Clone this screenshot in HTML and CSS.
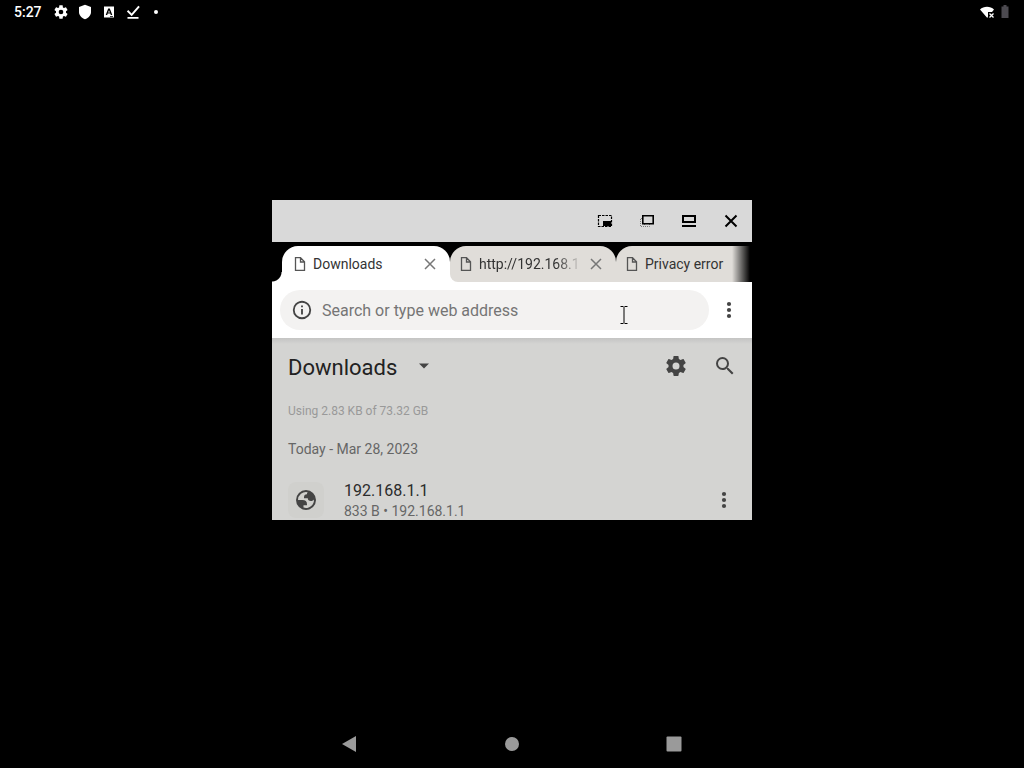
FILE: index.html
```html
<!DOCTYPE html>
<html lang="en">

<head>
    <meta charset="UTF-8">
    <meta name="viewport" content="width=device-width, initial-scale=1.0">
    <title>Downloads</title>
    <link rel="stylesheet" href="styles.css">
</head>

<body>

    <header class="status-bar">
        <span class="clock">5:27</span>
        <div class="notifications">
            <svg viewBox="0 0 24 24" width="16" height="16"><path d="M19.43 12.98c.04-.32.07-.64.07-.98s-.03-.66-.07-.98l2.11-1.65c.19-.15.24-.42.12-.64l-2-3.46c-.12-.22-.39-.3-.61-.22l-2.49 1c-.52-.4-1.08-.73-1.69-.98l-.38-2.65C14.46 2.18 14.25 2 14 2h-4c-.25 0-.46.18-.49.42l-.38 2.65c-.61.25-1.17.59-1.69.98l-2.49-1c-.23-.09-.49 0-.61.22l-2 3.46c-.13.22-.07.49.12.64l2.11 1.65c-.04.32-.07.65-.07.98s.03.66.07.98l-2.11 1.65c-.19.15-.24.42-.12.64l2 3.46c.12.22.39.3.61.22l2.49-1c.52.4 1.08.73 1.69.98l.38 2.65c.03.24.24.42.49.42h4c.25 0 .46-.18.49-.42l.38-2.65c.61-.25 1.17-.59 1.69-.98l2.49 1c.23.09.49 0 .61-.22l2-3.46c.12-.22.07-.49-.12-.64zM12 15.5A3.5 3.5 0 1 1 12 8.5a3.5 3.5 0 0 1 0 7z"/></svg>
            <svg viewBox="0 0 16 16" width="16" height="16"><path d="M8 .8l6 2.300V8c0 3.200-2.300 6-6 7.200C4.300 14 2 11.200 2 8V3.100z"/></svg>
            <svg viewBox="0 0 16 16" width="16" height="16"><path fill-rule="evenodd" d="M3 2.500h10v11H3zM7.200 4.500L4.700 11h1.500l.5-1.400h2.600L9.800 11h1.500L8.800 4.500zM8 6.200l.9 2.300H7.100zM9 12h3v.8H9z"/></svg>
            <svg viewBox="0 0 16 16" width="16" height="16"><path d="M2.500 13h11v1.800h-11zM3.200 6.100l3.400 3.400 6.700-7.700 1.500 1.300-8.100 9.100-4.800-4.800z"/></svg>
            <svg viewBox="0 0 16 16" width="16" height="16"><circle cx="7" cy="8" r="2"/></svg>
        </div>
        <div class="system-icons">
            <svg viewBox="0 0 16 16" width="16" height="16"><path d="M1 5.500C4.500 1.800 11.500 1.800 15 5.500L13 8H9v4.500L8.300 14z"/><path d="M10.500 9.500l4 4M14.500 9.500l-4 4" stroke="#fff" stroke-width="1.300"/></svg>
            <svg class="battery" viewBox="0 0 10 16" width="10" height="16"><path d="M3.500 1h3v1.500H8.500V14h-7V2.500h2z"/></svg>
        </div>
    </header>

    <main class="desktop">
        <section class="window">
            <div class="caption-bar">
                <button type="button" aria-label="Picture in picture">
                    <svg viewBox="0 0 16 16" width="16" height="16"><path d="M1.500 2.500h13v11h-13z" fill="none" stroke="#000" stroke-width="1.200" stroke-dasharray="2.500 1"/><path d="M6 8h8v5H6z"/></svg>
                </button>
                <button type="button" aria-label="Restore">
                    <svg viewBox="0 0 16 16" width="16" height="16"><path d="M3 5.500H1.500v8h9V11M5.500 11v2" fill="none" stroke="#777" stroke-dasharray="1 1"/><path d="M3.800 2.800h10.400v7.900H3.800z" fill="none" stroke="#000" stroke-width="1.600"/></svg>
                </button>
                <button type="button" aria-label="Maximize">
                    <svg viewBox="0 0 16 16" width="16" height="16"><path d="M2 3h12v6H2z" fill="none" stroke="#000" stroke-width="2"/><path d="M1 12h14v2H1z"/></svg>
                </button>
                <button type="button" aria-label="Close window">
                    <svg viewBox="0 0 16 16" width="16" height="16"><path d="M2.500 2.500l11 11M13.500 2.500l-11 11" stroke="#000" stroke-width="2"/></svg>
                </button>
            </div>

            <nav class="tab-strip">
                <div class="tab active">
                    <svg class="page-icon" viewBox="0 0 14 16" width="14" height="16"><path d="M2.500 1.700h5L11.500 5.700v8.600h-9zM7.500 2v4h4"/></svg>
                    <button type="button" class="tab-title">Downloads</button>
                    <button type="button" class="tab-close" aria-label="Close tab"><svg viewBox="0 0 12 12" width="12" height="12"><path d="M1 1l10 10M11 1L1 11"/></svg></button>
                </div>
                <div class="tab">
                    <svg class="page-icon" viewBox="0 0 14 16" width="14" height="16"><path d="M2.500 1.700h5L11.500 5.700v8.600h-9zM7.500 2v4h4"/></svg>
                    <button type="button" class="tab-title faded">http://192.168.1</button>
                    <button type="button" class="tab-close" aria-label="Close tab"><svg viewBox="0 0 12 12" width="12" height="12"><path d="M1 1l10 10M11 1L1 11"/></svg></button>
                </div>
                <div class="tab last">
                    <svg class="page-icon" viewBox="0 0 14 16" width="14" height="16"><path d="M2.500 1.700h5L11.500 5.700v8.600h-9zM7.500 2v4h4"/></svg>
                    <button type="button" class="tab-title">Privacy error</button>
                </div>
            </nav>

            <div class="toolbar">
                <label class="omnibox">
                    <svg viewBox="0 0 24 24" width="22" height="22"><path d="M11 17h2v-6h-2v6zm1-15a10 10 0 1 0 0 20 10 10 0 0 0 0-20zm0 18a8 8 0 1 1 0-16 8 8 0 0 1 0 16zM11 9h2V7h-2v2z"/></svg>
                    <input type="text" placeholder="Search or type web address" aria-label="Search or type web address">
                    <svg class="cursor" viewBox="0 0 8 20" width="8" height="20"><path d="M.5 1.500h3M4.500 1.500h3M4 2v16M.5 18.500h3M4.500 18.500h3"/></svg>
                </label>
                <button type="button" class="menu" aria-label="Menu">
                    <svg viewBox="0 0 24 24" width="24" height="24"><circle cx="12" cy="6" r="2.100"/><circle cx="12" cy="12" r="2.100"/><circle cx="12" cy="18" r="2.100"/></svg>
                </button>
            </div>

            <div class="downloads">
                <div class="downloads-header">
                    <h1>Downloads</h1>
                    <button type="button" class="filter" aria-label="Filter">
                        <svg viewBox="0 0 10 6" width="10" height="6"><path d="M0 .5h10L5 5.500z"/></svg>
                    </button>
                    <div class="actions">
                        <button type="button" aria-label="Settings">
                            <svg viewBox="0 0 24 24" width="24" height="24"><path d="M19.43 12.98c.04-.32.07-.64.07-.98s-.03-.66-.07-.98l2.11-1.65c.19-.15.24-.42.12-.64l-2-3.46c-.12-.22-.39-.3-.61-.22l-2.49 1c-.52-.4-1.08-.73-1.69-.98l-.38-2.65C14.46 2.18 14.25 2 14 2h-4c-.25 0-.46.18-.49.42l-.38 2.65c-.61.25-1.17.59-1.69.98l-2.49-1c-.23-.09-.49 0-.61.22l-2 3.46c-.13.22-.07.49.12.64l2.11 1.65c-.04.32-.07.65-.07.98s.03.66.07.98l-2.11 1.65c-.19.15-.24.42-.12.64l2 3.46c.12.22.39.3.61.22l2.49-1c.52.4 1.08.73 1.69.98l.38 2.65c.03.24.24.42.49.42h4c.25 0 .46-.18.49-.42l.38-2.65c.61-.25 1.17-.59 1.69-.98l2.49 1c.23.09.49 0 .61-.22l2-3.46c.12-.22.07-.49-.12-.64zM12 15.5A3.5 3.5 0 1 1 12 8.5a3.5 3.5 0 0 1 0 7z"/></svg>
                        </button>
                        <button type="button" aria-label="Search">
                            <svg viewBox="0 0 24 24" width="24" height="24"><path d="M15.5 14h-.79l-.28-.27A6.47 6.47 0 0 0 16 9.5 6.5 6.5 0 1 0 9.5 16c1.61 0 3.09-.59 4.23-1.57l.27.28v.79l5 4.99L20.49 19l-4.99-5zm-6 0a4.5 4.5 0 1 1 0-9 4.5 4.5 0 0 1 0 9z"/></svg>
                        </button>
                    </div>
                </div>
                <p class="storage">Using 2.83 KB of 73.32 GB</p>
                <h2>Today - Mar 28, 2023</h2>
                <ul>
                    <li class="download">
                        <span class="download-icon">
                            <svg viewBox="0 0 24 24" width="24" height="24"><path fill-rule="evenodd" d="M12 2a10 10 0 1 0 0 20 10 10 0 0 0 0-20zM4 12h4.400c3.407.022 4.922 1.730 4.543 5.127H9.488v2.470a8.004 8.004 0 0 0 10.498-8.083C19.327 12.504 18.332 13 17 13c-2.137 0-3.206-.916-3.206-2.750h-3.748c-.274-2.728.683-4.092 2.870-4.092 0-.975.327-1.597.811-1.970A8.004 8.004 0 0 0 4 12z"/></svg>
                        </span>
                        <div class="download-info">
                            <span class="name">192.168.1.1</span>
                            <span class="details">833 B • 192.168.1.1</span>
                        </div>
                        <button type="button" class="more" aria-label="More options">
                            <svg viewBox="0 0 24 24" width="24" height="24"><circle cx="12" cy="6" r="2.100"/><circle cx="12" cy="12" r="2.100"/><circle cx="12" cy="18" r="2.100"/></svg>
                        </button>
                    </li>
                </ul>
            </div>
        </section>
    </main>

    <footer class="nav-bar">
        <button type="button" aria-label="Back"><svg viewBox="0 0 16 16" width="16" height="16"><path d="M0 8L14 0v16z"/></svg></button>
        <button type="button" aria-label="Home"><svg viewBox="0 0 16 16" width="16" height="16"><circle cx="8" cy="8" r="7"/></svg></button>
        <button type="button" aria-label="Recent apps"><svg viewBox="0 0 16 16" width="16" height="16"><rect x=".5" y=".5" width="15" height="15" rx="1"/></svg></button>
    </footer>

</body>
</html>
```
FILE: styles.css
```css
* {
    box-sizing: border-box;
}

body {
    margin: 0;
    min-height: 100vh;
    display: flex;
    flex-direction: column;
    background-color: #000;
    font-family: Roboto, sans-serif;
}

button {
    display: flex;
    align-items: center;
    justify-content: center;
    padding: 0;
    border: none;
    background: none;
    color: inherit;
    font: inherit;
    cursor: pointer;
}

svg {
    flex-shrink: 0;
}

/* status bar */
.status-bar {
    display: flex;
    align-items: center;
    height: 24px;
    padding: 0 14px;
    color: #fff;
    fill: #fff;
}

.clock {
    font-size: 14px;
    font-weight: 500;
}

.notifications {
    display: flex;
    gap: 8px;
    margin-left: 11px;
}

.system-icons {
    display: flex;
    gap: 5px;
    margin-left: auto;
}

.battery {
    fill: #4c4a50;
}

/* floating window */
.desktop {
    flex: 1;
    display: flex;
    align-items: center;
    justify-content: center;
    padding-bottom: 24px;
}

.window {
    width: 90%;
    max-width: 480px;
    overflow: hidden;
    background-color: #fff;
}

.caption-bar {
    display: flex;
    justify-content: flex-end;
    height: 42px;
    background-color: #d9d9d9;
}

.caption-bar button {
    width: 42px;
}

/* tabs */
.tab-strip {
    position: relative;
    display: flex;
    height: 40px;
    padding: 4px 0 0 10px;
    background-color: #000;
    font-size: 14px;
    color: #333;
}

.tab-strip::after {
    content: "";
    position: absolute;
    top: 0;
    right: 0;
    width: 20px;
    height: 100%;
    background: linear-gradient(to right, transparent, #000 90%);
}

.tab {
    position: relative;
    display: flex;
    align-items: center;
    width: 166px;
    padding: 0 14px 0 9px;
    border-radius: 16px 16px 0 8px;
    background-color: #e0ddd9;
}

.tab.active {
    width: 168px;
    padding-left: 11px;
    border-radius: 16px 16px 0 0;
    background-color: #fff;
}

/* curved foot on the left and white fill behind the next tab */
.tab.active::before {
    content: "";
    position: absolute;
    left: -10px;
    bottom: 0;
    width: 10px;
    height: 10px;
    background: radial-gradient(circle at 0 0, transparent 9px, #fff 10px);
}

.tab.active::after {
    content: "";
    position: absolute;
    left: 100%;
    bottom: 0;
    width: 10px;
    height: 10px;
    background-color: #fff;
}

.tab.last {
    flex: 1;
    border-radius: 16px 0 0 0;
}

.page-icon {
    margin-right: 6px;
    fill: none;
    stroke: #555;
    stroke-width: 1.3;
}

.tab-title {
    flex: 1;
    min-width: 0;
    justify-content: flex-start;
    white-space: nowrap;
}

.tab-title.faded {
    margin-right: 8px;
    mask-image: linear-gradient(to right, #000 75%, transparent);
}

.tab-close svg {
    stroke: #777;
    stroke-width: 1.5;
}

/* address bar */
.toolbar {
    display: flex;
    align-items: center;
    height: 56px;
    padding: 0 3px 0 8px;
    fill: #444;
}

.omnibox {
    position: relative;
    flex: 1;
    display: flex;
    align-items: center;
    gap: 9px;
    height: 40px;
    padding: 0 11px;
    border-radius: 20px;
    background-color: #f3f2f1;
}

.omnibox input {
    flex: 1;
    min-width: 0;
    padding: 0;
    border: none;
    outline: none;
    background: none;
    font: 16px Roboto, sans-serif;
    color: #333;
}

.omnibox input::placeholder {
    color: #757575;
    opacity: 1;
}

.cursor {
    position: absolute;
    right: 81px;
    top: 15px;
    stroke: #000;
}

.menu {
    width: 40px;
    height: 40px;
}

/* downloads page */
.downloads {
    padding: 0 3px 0 16px;
    background: linear-gradient(#c4c4c3, #d4d4d2 6px);
    fill: #444;
}

.downloads-header {
    display: flex;
    align-items: center;
    height: 56px;
}

h1 {
    margin: 0;
    padding-top: 3px;
    font-size: 22px;
    line-height: 28px;
    font-weight: 400;
    color: #222;
}

.filter {
    width: 48px;
    height: 48px;
    margin-left: 3px;
}

.actions {
    display: flex;
    margin-left: auto;
}

.actions button {
    width: 49px;
    height: 48px;
}

.storage {
    margin: 9px 0 20px;
    font-size: 12px;
    line-height: 16px;
    color: #999;
}

h2 {
    margin: 0 0 21px;
    font-size: 14px;
    line-height: 20px;
    font-weight: 400;
    color: #666;
}

ul {
    margin: 0;
    padding: 0;
    list-style: none;
}

.download {
    display: flex;
    align-items: center;
}

.download-icon {
    display: flex;
    align-items: center;
    justify-content: center;
    width: 36px;
    height: 36px;
    margin-right: 20px;
    border-radius: 8px;
    background-color: #d0d0cd;
}

.download-info {
    flex: 1;
    display: flex;
    flex-direction: column;
}

.name {
    font-size: 16px;
    line-height: 22px;
    color: #2b2b2b;
}

.details {
    font-size: 14px;
    line-height: 18px;
    color: #666;
}

.more {
    width: 50px;
    height: 40px;
}

/* navigation bar */
.nav-bar {
    display: flex;
    justify-content: center;
    height: 48px;
    fill: #9a9a9a;
}

.nav-bar button {
    width: 162px;
}
```
